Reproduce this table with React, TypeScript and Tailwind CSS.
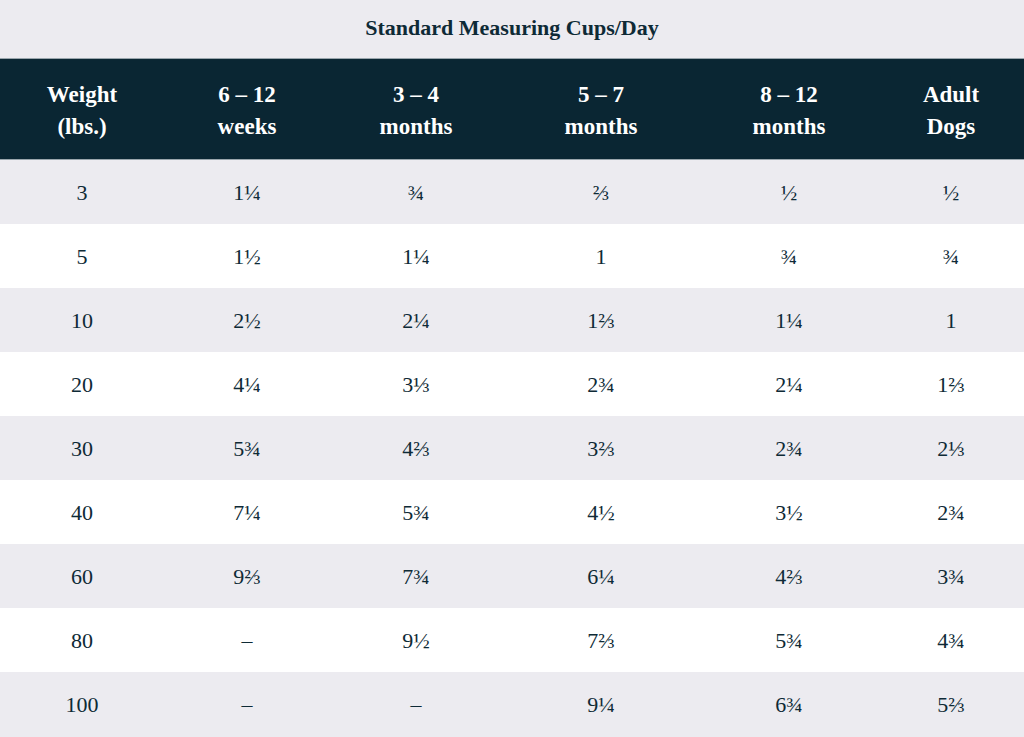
const COLS = "grid-cols-[164px_166px_172px_198px_178px_146px]";

const HEAD = [
  ["Weight", "(lbs.)"],
  ["6 – 12", "weeks"],
  ["3 – 4", "months"],
  ["5 – 7", "months"],
  ["8 – 12", "months"],
  ["Adult", "Dogs"],
];

const ROWS = [
  ["3", "1¼", "¾", "⅔", "½", "½"],
  ["5", "1½", "1¼", "1", "¾", "¾"],
  ["10", "2½", "2¼", "1⅔", "1¼", "1"],
  ["20", "4¼", "3⅓", "2¾", "2¼", "1⅔"],
  ["30", "5¾", "4⅔", "3⅔", "2¾", "2⅓"],
  ["40", "7¼", "5¾", "4½", "3½", "2¾"],
  ["60", "9⅔", "7¾", "6¼", "4⅔", "3¾"],
  ["80", "–", "9½", "7⅔", "5¾", "4¾"],
  ["100", "–", "–", "9¼", "6¾", "5⅔"],
];

export default function App() {
  return (
    <div className="w-[1024px] h-[737px] overflow-hidden bg-[#ecebf0] text-[#0e2a36] font-['Liberation_Serif',serif]">
      <div className="h-[58px] flex items-center justify-center pb-1 text-[22px] font-bold">
        Standard Measuring Cups/Day
      </div>
      <div
        className={`grid ${COLS} h-[102px] bg-[#0a2633] text-white border-y border-[#9aa6ad] items-center pt-1`}
      >
        {HEAD.map(([a, b]) => (
          <div key={a} className="text-center text-[23px] font-bold leading-[32px]">
            <div>{a}</div>
            <div>{b}</div>
          </div>
        ))}
      </div>
      {ROWS.map((r, i) => (
        <div
          key={r[0]}
          className={`grid ${COLS} h-[64px] items-center text-[22px] ${
            i % 2 === 0 ? "bg-[#ecebf0]" : "bg-white"
          }`}
        >
          {r.map((c, j) => (
            <div key={j} className="text-center">
              {c}
            </div>
          ))}
        </div>
      ))}
    </div>
  );
}
